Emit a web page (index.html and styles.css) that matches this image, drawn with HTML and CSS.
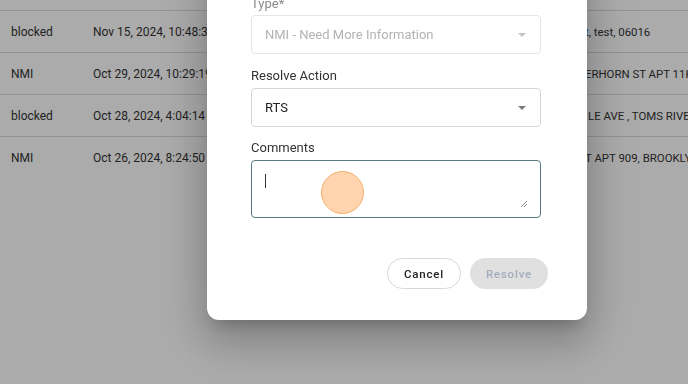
FILE: index.html
```html
<!DOCTYPE html>
<html>
<head>
<meta charset="utf-8">
<link rel="stylesheet" href="styles.css">
</head>
<body>
<div class="page">
  <div class="table">
    <div class="row"><span class="c1">blocked</span><span class="c2">Nov 15, 2024, 10:48:31 AM</span><span class="c3">t, test, 06016</span></div>
    <div class="row"><span class="c1">NMI</span><span class="c2">Oct 29, 2024, 10:29:19 AM</span><span class="c3">ERHORN ST APT 11K</span></div>
    <div class="row"><span class="c1">blocked</span><span class="c2">Oct 28, 2024, 4:04:14 PM</span><span class="c3 c3b">LE AVE , TOMS RIVER</span></div>
    <div class="row"><span class="c1">NMI</span><span class="c2">Oct 26, 2024, 8:24:50 AM</span><span class="c3">T APT 909, BROOKLYN</span></div>
  </div>
</div>
<div class="overlay"></div>
<div class="dialog">
  <div class="form">
    <div class="label label-muted">Type*</div>
    <div class="select select-disabled"><span>NMI - Need More Information</span><i class="arrow"></i></div>
    <div class="label">Resolve Action</div>
    <div class="select"><span>RTS</span><i class="arrow"></i></div>
    <div class="label">Comments</div>
    <div class="textarea"><i class="caret"></i>
      <svg class="grip" width="9" height="9" viewBox="0 0 9 9"><path d="M8 2 L2 8 M8 5 L5 8" stroke="#888" stroke-width="0.9"/></svg>
    </div>
  </div>
  <div class="actions">
    <button class="btn btn-cancel">Cancel</button>
    <button class="btn btn-resolve">Resolve</button>
  </div>
</div>
<div class="pointer"></div>
</body>
</html>
```

FILE: styles.css
```css
html, body {
  margin: 0;
  padding: 0;
  width: 688px;
  height: 384px;
  overflow: hidden;
  background: #ffffff;
  font-family: Roboto, "Noto Sans", sans-serif;
}
.page {
  padding-top: 10px;
}
.table {
  display: flex;
  flex-direction: column;
}
.row {
  height: 41px;
  border-top: 1px solid #dcdcdc;
  display: flex;
  align-items: center;
  font-size: 12px;
  color: #333;
  white-space: nowrap;
  position: relative;
}
.c1 { padding-left: 11px; flex: none; box-sizing: border-box; width: 93px; }
.c2 { width: 492px; flex: none; }
.c3 { flex: none; font-size: 11.4px; }
.c3b { margin-left: 3px; }
.overlay {
  position: fixed;
  inset: 0;
  background: rgba(0, 0, 0, 0.33);
}
.dialog {
  position: absolute;
  left: 207px;
  bottom: 64px;
  width: 380px;
  background: #fff;
  border-radius: 12px;
  padding-top: 28px;
  padding-bottom: 31px;
  box-shadow: 0 11px 15px -7px rgba(0,0,0,.2), 0 24px 38px 3px rgba(0,0,0,.14), 0 9px 46px 8px rgba(0,0,0,.12);
}
.form {
  padding: 0 46px 0 44px;
  display: flex;
  flex-direction: column;
}
.label {
  font-size: 13px;
  line-height: 15px;
  color: #333;
  margin-bottom: 5px;
}
.label-muted { color: #8a8a8a; margin-bottom: 4px; }
.select {
  height: 39px;
  box-sizing: border-box;
  border: 1px solid #d6d6d6;
  border-radius: 4px;
  display: flex;
  align-items: center;
  justify-content: space-between;
  padding: 0 14px 0 13px;
  font-size: 13px;
  color: #222;
  margin-bottom: 13px;
}
.select-disabled {
  border-color: #e6e6e6;
  color: #b3b3b3;
  margin-bottom: 14px;
}
.arrow {
  width: 0;
  height: 0;
  border-left: 4px solid transparent;
  border-right: 4px solid transparent;
  border-top: 4px solid #7a7a7a;
}
.select-disabled .arrow { border-top-color: #c4c4c4; }
.textarea {
  height: 58px;
  box-sizing: border-box;
  border: 1.5px solid #55787f;
  border-radius: 4px;
  position: relative;
  padding: 13px 13px;
}
.caret {
  display: block;
  width: 1px;
  height: 14px;
  background: #333;
}
.grip {
  position: absolute;
  right: 12px;
  bottom: 9px;
}
.actions {
  margin-top: 40px;
  padding-right: 39px;
  display: flex;
  justify-content: flex-end;
  gap: 9px;
}
.btn {
  height: 31px;
  border-radius: 16px;
  font-family: Roboto, sans-serif;
  font-size: 11.5px;
  font-weight: 500;
  letter-spacing: 0.8px;
  padding: 0;
}
.btn-cancel {
  width: 74px;
  background: #fff;
  border: 1px solid #d9d9d9;
  color: #222;
}
.btn-resolve {
  width: 78px;
  background: #e0e0e0;
  border: none;
  color: #a3adbb;
}
.pointer {
  position: absolute;
  left: 321px;
  top: 171px;
  width: 41px;
  height: 41px;
  border-radius: 50%;
  background: rgba(255, 205, 160, 0.85);
  border: 1.5px solid #f5b06c;
}
```
